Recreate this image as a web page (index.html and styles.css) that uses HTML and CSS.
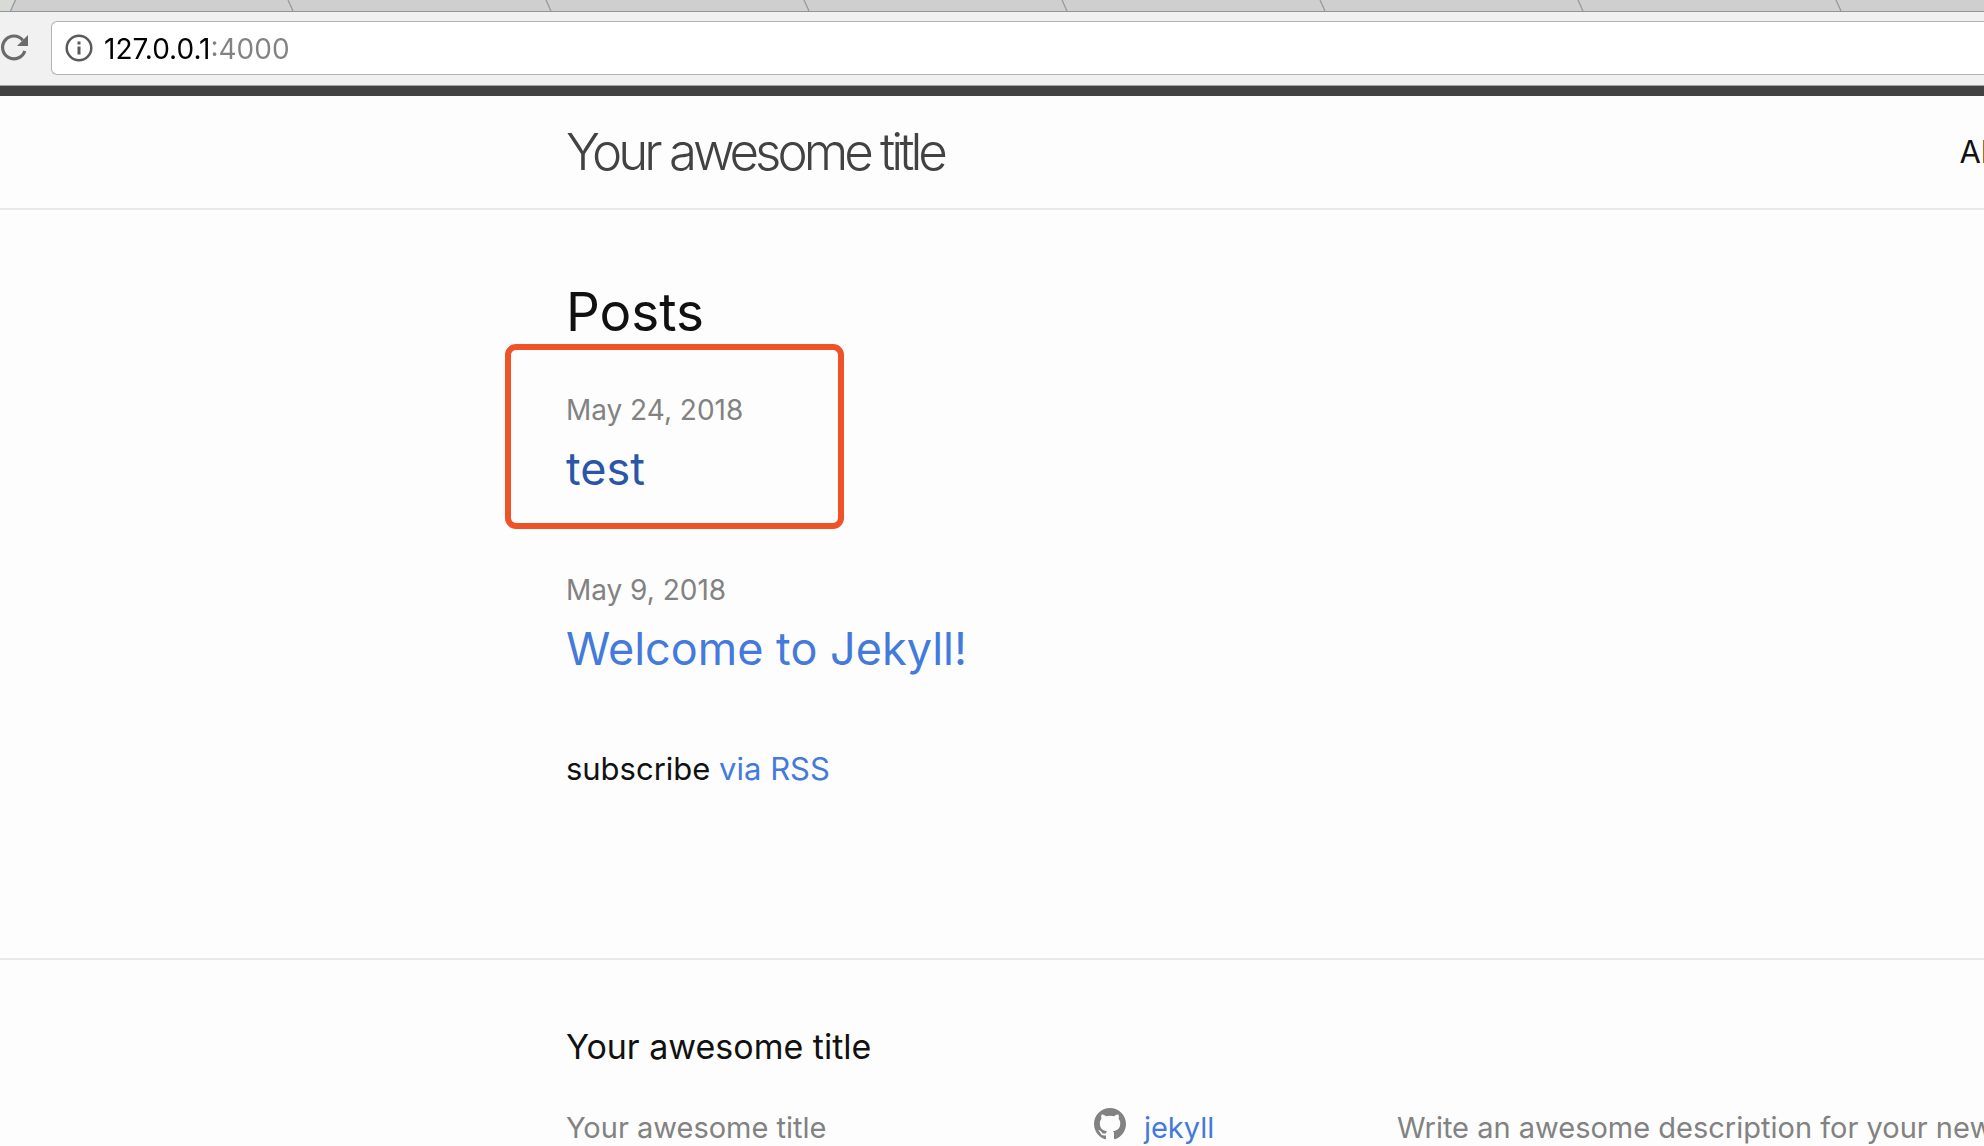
FILE: index.html
```html
<!DOCTYPE html>
<html lang="en">
<head>
<meta charset="utf-8">
<title>Your awesome title</title>
<link rel="stylesheet" href="styles.css">
</head>
<body>
<div class="browser">
  <div class="tabs">
    <svg class="tab-start" width="36" height="11" viewBox="0 0 36 11" aria-hidden="true"><path d="M0 0H15L10 11H0z" fill="#d8dad6"/><path d="M15.500 0L10.500 11" stroke="#999" stroke-width="1.300"/></svg>
    <div class="tab"><svg width="8" height="11" aria-hidden="true"><path d="M2 0L7 11" stroke="#999" stroke-width="1.300"/></svg></div>
    <div class="tab"><svg width="8" height="11" aria-hidden="true"><path d="M2 0L7 11" stroke="#999" stroke-width="1.300"/></svg></div>
    <div class="tab"><svg width="8" height="11" aria-hidden="true"><path d="M2 0L7 11" stroke="#999" stroke-width="1.300"/></svg></div>
    <div class="tab"><svg width="8" height="11" aria-hidden="true"><path d="M2 0L7 11" stroke="#999" stroke-width="1.300"/></svg></div>
    <div class="tab"><svg width="8" height="11" aria-hidden="true"><path d="M2 0L7 11" stroke="#999" stroke-width="1.300"/></svg></div>
    <div class="tab"><svg width="8" height="11" aria-hidden="true"><path d="M2 0L7 11" stroke="#999" stroke-width="1.300"/></svg></div>
    <div class="tab"><svg width="8" height="11" aria-hidden="true"><path d="M2 0L7 11" stroke="#999" stroke-width="1.300"/></svg></div>
  </div>
  <div class="toolbar">
    <button class="reload" type="button" aria-label="Reload">
      <svg width="30" height="30" viewBox="0 0 30 30" fill="none" aria-hidden="true"><path d="M22.800 7.200A11.400 11.400 0 1 0 24.800 18" stroke="#6b6b6b" stroke-width="3.200"/><path d="M28 2V13H17z" fill="#6b6b6b"/></svg>
    </button>
    <div class="address">
      <svg width="28" height="28" viewBox="0 0 28 28" fill="none" aria-hidden="true"><circle cx="14" cy="14" r="12.300" stroke="#5a5a5a" stroke-width="2.500"/><path d="M12.500 7.500h3v3h-3zM12.500 12.500h3v8h-3z" fill="#5a5a5a"/></svg>
      <input class="url" type="text" value="127.0.0.1:4000" aria-label="Address">
    </div>
  </div>
</div>

<header class="site-header">
  <div class="wrapper header-row">
    <a class="site-title" href="#">Your awesome title</a>
    <nav><a class="page-link" href="#">About</a></nav>
  </div>
</header>

<main class="page-content">
  <div class="wrapper">
    <h1 class="heading">Posts</h1>
    <ul class="post-list">
      <li class="marked">
        <span class="post-meta">May 24, 2018</span>
        <h2 class="post-title"><a class="visiting" href="#">test</a></h2>
      </li>
      <li>
        <span class="post-meta">May 9, 2018</span>
        <h2 class="post-title"><a href="#">Welcome to Jekyll!</a></h2>
      </li>
    </ul>
    <p class="subscribe">subscribe <a href="#">via RSS</a></p>
  </div>
</main>

<footer class="site-footer">
  <div class="wrapper">
    <h2 class="footer-heading">Your awesome title</h2>
    <div class="footer-cols">
      <div>Your awesome title</div>
      <div class="social">
        <svg width="32" height="32" viewBox="0 0 16 16" aria-hidden="true"><path fill="#828282" d="M8 0C3.580 0 0 3.580 0 8c0 3.540 2.290 6.530 5.470 7.590.4.070.55-.17.55-.38 0-.19-.01-.82-.01-1.490-2.010.37-2.530-.49-2.690-.94-.09-.23-.48-.94-.82-1.130-.28-.15-.68-.52-.01-.53.63-.01 1.080.58 1.230.82.72 1.210 1.870.87 2.330.66.07-.52.28-.87.51-1.070-1.780-.2-3.640-.89-3.640-3.950 0-.87.31-1.590.82-2.150-.08-.2-.36-1.020.08-2.120 0 0 .67-.21 2.200.82.640-.18 1.320-.27 2-.27s1.360.09 2 .27c1.530-1.040 2.200-.82 2.200-.82.44 1.100.16 1.920.08 2.120.51.56.82 1.270.82 2.150 0 3.070-1.870 3.750-3.650 3.950.29.25.54.73.54 1.480 0 1.070-.01 1.930-.01 2.200 0 .21.15.46.55.38C13.710 14.530 16 11.530 16 8c0-4.420-3.580-8-8-8z"/></svg>
        <a href="#">jekyll</a>
      </div>
      <p class="description">Write an awesome description for your new</p>
    </div>
  </div>
</footer>
</body>
</html>
```
FILE: styles.css
```css
*, *::after { box-sizing: border-box; }

body {
  margin: 0;
  height: 100vh;
  overflow: hidden;
  background: #fdfdfd;
  color: #111;
  font: 400 31px/48px Inter, "Liberation Sans", sans-serif;
}

h1, h2, p, ul { margin: 0; padding: 0; font-weight: 400; }
ul { list-style: none; }
a { color: #437adb; text-decoration: none; }
svg { display: block; flex: none; }

/* Browser chrome */
.browser { background: #f1f1f1; border-bottom: 1px solid #a5a5a5; }
.tabs {
  display: flex;
  height: 12px;
  background: #cfcfcf;
  border-bottom: 1px solid #959595;
}
.tab { display: flex; flex: none; justify-content: flex-end; width: 258px; }
.toolbar { display: flex; gap: 21px; padding: 9px 0 10px; }
.reload {
  display: flex;
  align-items: center;
  width: 30px;
  padding: 0;
  border: 0;
  background: none;
}
.address {
  display: flex;
  flex: 1;
  align-items: center;
  gap: 11px;
  height: 54px;
  padding-left: 13px;
  background: #fff;
  border: 1px solid #b3b3b3;
  border-right: 0;
  border-radius: 6px 0 0 6px;
}
.url {
  flex: 1;
  height: 52px;
  padding: 2px 0 0;
  border: 0;
  outline: 0;
  font: 400 28px/48px Inter, "Liberation Sans", sans-serif;
  color: transparent;
  background: linear-gradient(90deg, #000 107px, #828282 107px);
  background-clip: text;
  -webkit-background-clip: text;
}

/* Site */
.wrapper { width: 80.7%; margin-left: 25.5%; padding: 0 60px; }
.site-header { border-top: 10px solid #424242; border-bottom: 2px solid #e8e8e8; }
.header-row { display: flex; justify-content: space-between; align-items: center; height: 112px; }
.site-title { color: #424242; font-size: 51px; font-weight: 300; letter-spacing: -4px; }
.page-link { color: #111; }

.page-content { padding: 60px 0 136px; }
.heading { margin-bottom: 30px; font-size: 53px; line-height: 85px; }
.post-list li { position: relative; margin-bottom: 62px; }
.post-meta { display: block; color: #828282; font-size: 28px; line-height: 50px; }
.post-title { font-size: 45px; line-height: 68px; }
.visiting { color: #2a56a8; }
.subscribe { margin-bottom: 29px; }

/* Annotation frame drawn over the newest post */
.marked::after {
  content: "";
  position: absolute;
  top: -41px;
  left: -61px;
  width: 339px;
  height: 185px;
  border: 6px solid #f05228;
  border-radius: 11px;
}

.site-footer { padding: 60px 0; border-top: 2px solid #e8e8e8; }
.footer-heading { margin-bottom: 30px; font-size: 34px; line-height: 54px; }
.footer-cols {
  display: grid;
  grid-template-columns: 528px 303px 1fr;
  color: #828282;
  font-size: 29px;
  line-height: 48px;
}
.social { display: flex; gap: 18px; }
.social svg { margin-top: 4px; }
.description { white-space: nowrap; }
```
